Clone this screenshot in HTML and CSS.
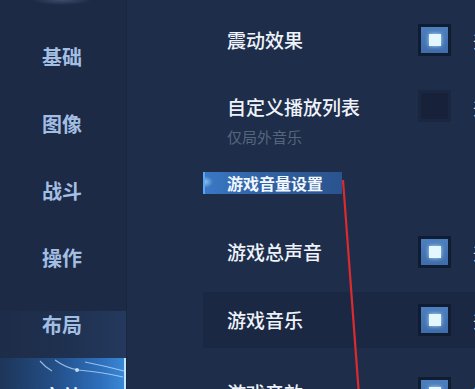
FILE: index.html
```html
<!DOCTYPE html>
<html lang="zh">
<head>
<meta charset="utf-8">
<link rel="stylesheet" href="styles.css">
</head>
<body>
<div class="screen">
  <aside class="sidebar">
    <div class="nav-item">基础</div>
    <div class="nav-item">图像</div>
    <div class="nav-item">战斗</div>
    <div class="nav-item">操作</div>
    <div class="nav-item hover">布局</div>
    <div class="nav-item active">
      <svg class="curves" width="127" height="40" viewBox="0 0 127 40">
        <path d="M40 3 Q45 9 52 13" />
        <path d="M55 2 Q66 10 78 12 Q102 14 123 19" />
        <path d="M85 4 Q105 8 124 13" />
        <circle cx="77" cy="12" r="2" />
      </svg>
      <span>音效</span>
    </div>
  </aside>
  <main class="content">
    <div class="row r1">
      <div class="label-col"><div class="label">震动效果</div></div>
      <div class="check on"></div>
      <div class="state">开启</div>
    </div>
    <div class="row r2">
      <div class="label-col">
        <div class="label">自定义播放列表</div>
        <div class="sub">仅局外音乐</div>
      </div>
      <div class="check off"></div>
      <div class="state">开启</div>
    </div>
    <div class="section">游戏音量设置</div>
    <div class="row r3">
      <div class="label-col"><div class="label">游戏总声音</div></div>
      <div class="check on"></div>
      <div class="state">开启</div>
    </div>
    <div class="row r4">
      <div class="label-col"><div class="label">游戏音乐</div></div>
      <div class="check on"></div>
      <div class="state">开启</div>
    </div>
    <div class="row r5">
      <div class="label-col"><div class="label">游戏音效</div></div>
      <div class="check on"></div>
      <div class="state">开启</div>
    </div>
  </main>
  <svg class="annot" width="475" height="389" viewBox="0 0 475 389">
    <line x1="343" y1="180" x2="358.5" y2="389" />
  </svg>
</div>
</body>
</html>
```

FILE: styles.css
```css
* { box-sizing: border-box; margin: 0; padding: 0; }
html, body { width: 475px; height: 389px; overflow: hidden; background: #1e2d49; }
body { font-family: "Noto Sans CJK SC", "Noto Sans", sans-serif; }

.screen {
  position: relative;
  width: 475px;
  height: 389px;
  display: flex;
  overflow: hidden;
  background: #1e2d49;
}

.sidebar {
  width: 127px;
  flex: none;
  padding-top: 23px;
  border-right: 1px solid #19263f;
  background:
    radial-gradient(ellipse 30px 5px at 62px 0, rgba(160, 180, 230, 0.25), rgba(160, 180, 230, 0) 100%),
    #1c2a45;
  display: flex;
  flex-direction: column;
}

.nav-item {
  position: relative;
  height: 67px;
  flex: none;
  display: flex;
  align-items: center;
  padding-left: 42px;
  font-size: 20px;
  font-weight: 700;
  color: #a3bee3;
}

.nav-item.hover {
  background: linear-gradient(90deg, #1d2c48 0%, #1f3150 55%, #24395e 100%) no-repeat bottom / 100% 47px;
}

.nav-item.active {
  color: #eaf4ff;
  background: linear-gradient(90deg, #1d3558 0%, #24508a 45%, #2e6fbc 80%, #3a8ad8 100%);
  box-shadow: inset -2px 0 0 #bfe6ff;
  align-items: flex-start;
  padding-top: 24px;
}

.curves {
  position: absolute;
  left: 0;
  top: 0;
}
.curves path { fill: none; stroke: rgba(200, 230, 255, 0.7); stroke-width: 1.2; }
.curves circle { fill: rgba(220, 240, 255, 0.8); }

.content {
  flex: 1;
  padding-top: 6px;
  display: flex;
  flex-direction: column;
}

.row {
  display: flex;
  align-items: center;
  margin-left: 76px;
  padding-left: 24px;
  flex: none;
}
.r1 { height: 68px; }
.r2 { height: 84px; align-items: flex-start; padding-top: 21px; }
.r2 .check { margin-top: -5px; }
.r3 { height: 62px; margin-top: 27px; }
.r4 { height: 56px; margin-top: 9px; background: #1b2843; }
.r5 { height: 90px; }

.label-col { width: 191px; flex: none; }
.label {
  font-size: 19px;
  line-height: 24px;
  font-weight: 500;
  color: #eef3fb;
  white-space: nowrap;
}
.sub {
  margin-top: 8px;
  font-size: 15px;
  line-height: 20px;
  color: #56657e;
  white-space: nowrap;
}

.check {
  width: 33px;
  height: 32px;
  flex: none;
  display: grid;
  place-items: center;
  border: 3px solid #101c31;
}
.check.on {
  background: linear-gradient(180deg, #4d7fbf, #3f6caa);
}
.check.on::after {
  content: "";
  width: 12px;
  height: 12px;
  background: #e4f7ff;
  box-shadow: 0 0 4px rgba(190, 235, 255, 0.9);
}
.check.off {
  background: #17223a;
  border-color: #1b2741;
}

.state {
  margin-left: 22px;
  font-size: 17px;
  color: #cdd8e8;
  white-space: nowrap;
}

.section {
  margin-top: 14px;
  margin-left: 76px;
  width: 139px;
  height: 22px;
  flex: none;
  padding-left: 22px;
  font-size: 16px;
  line-height: 22px;
  font-weight: 700;
  color: #f2f7ff;
  border-left: 2px solid #5aa6f0;
  background:
    radial-gradient(ellipse 8px 6px at 0 45%, rgba(180, 225, 255, 0.7), rgba(180, 225, 255, 0) 100%),
    linear-gradient(90deg, #3a78c6 0%, #3366a8 35%, #2d5a96 70%, #2a5490 100%);
  white-space: nowrap;
}

.annot {
  position: absolute;
  left: 0;
  top: 0;
  pointer-events: none;
}
.annot line { stroke: #dc2b2e; stroke-width: 2.2; }
```
